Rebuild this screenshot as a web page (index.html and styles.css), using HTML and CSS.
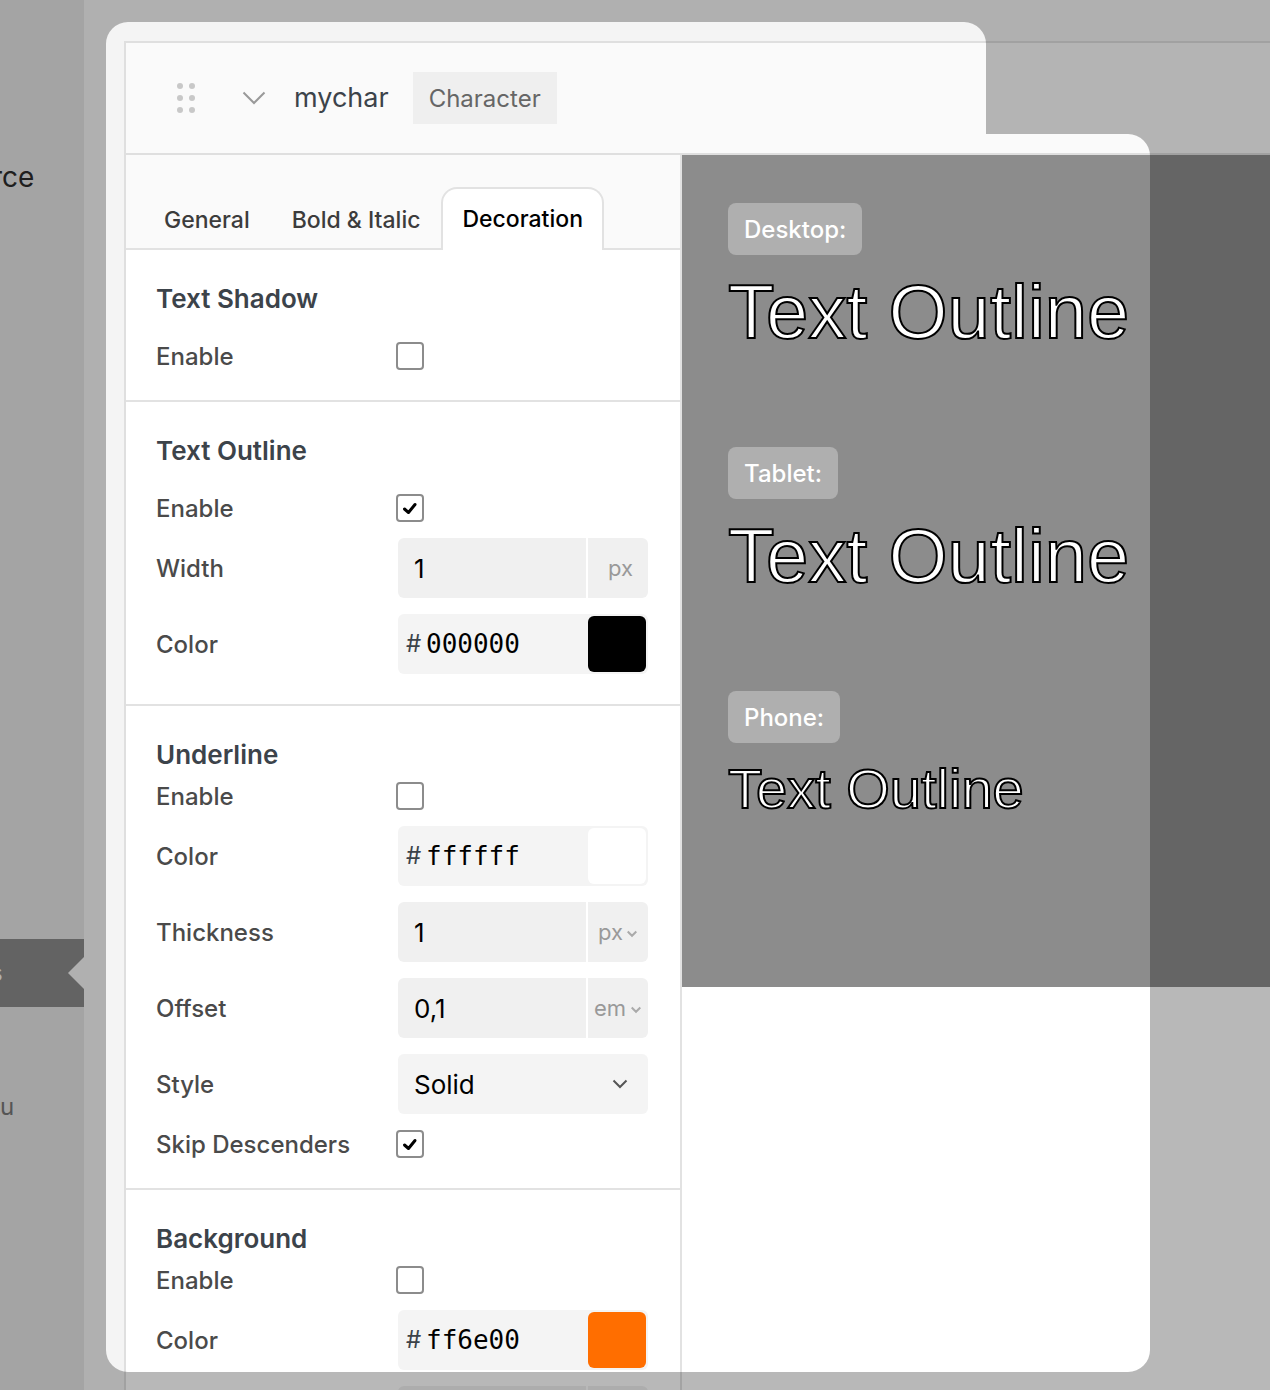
FILE: index.html
```html
<!DOCTYPE html>
<html lang="en">

<head>
    <meta charset="UTF-8">
    <meta name="viewport" content="width=device-width, initial-scale=1.0">
    <title>Character styles</title>
    <link rel="stylesheet" href="styles.css">
</head>

<body>
    <div class="app">
        <nav class="sidebar">
            <a class="menu-item" href="#">rce</a>
            <a class="menu-item current" href="#">s</a>
            <a class="menu-item submenu" href="#">u</a>
        </nav>

        <main class="content">
            <div class="panel">
                <header class="panel-head">
                    <button class="icon-btn drag" type="button" aria-label="Move">
                        <svg width="18" height="30" viewBox="0 0 18 30" fill="#c8c8c8">
                            <circle cx="3" cy="3" r="3" />
                            <circle cx="15" cy="3" r="3" />
                            <circle cx="3" cy="15" r="3" />
                            <circle cx="15" cy="15" r="3" />
                            <circle cx="3" cy="27" r="3" />
                            <circle cx="15" cy="27" r="3" />
                        </svg>
                    </button>
                    <button class="icon-btn collapse" type="button" aria-label="Collapse">
                        <svg width="24" height="14" viewBox="0 0 24 14" fill="none" stroke="#999" stroke-width="2">
                            <path d="M1.500 1.500L12 12L22.500 1.500" />
                        </svg>
                    </button>
                    <h1 class="panel-title">mychar</h1>
                    <span class="type">Character</span>
                </header>

                <div class="panel-body">
                    <form class="settings">
                        <div class="tabs" role="tablist">
                            <button class="tab" type="button" role="tab">General</button>
                            <button class="tab" type="button" role="tab">Bold &amp; Italic</button>
                            <button class="tab active" type="button" role="tab" aria-selected="true">Decoration</button>
                        </div>

                        <section class="group spaced">
                            <h2>Text Shadow</h2>
                            <div class="row">
                                <label for="shadow-enable">Enable</label>
                                <input type="checkbox" id="shadow-enable">
                            </div>
                        </section>

                        <section class="group spaced">
                            <h2>Text Outline</h2>
                            <div class="row">
                                <label for="outline-enable">Enable</label>
                                <input type="checkbox" id="outline-enable" checked>
                            </div>
                            <div class="row">
                                <label for="outline-width">Width</label>
                                <div class="field number">
                                    <input type="text" id="outline-width" value="1">
                                    <span class="unit">px</span>
                                </div>
                            </div>
                            <div class="row">
                                <label for="outline-color">Color</label>
                                <div class="field color">
                                    <span class="hash">#</span>
                                    <input type="text" id="outline-color" value="000000">
                                    <button class="swatch black" type="button" aria-label="Pick color"></button>
                                </div>
                            </div>
                        </section>

                        <section class="group">
                            <h2>Underline</h2>
                            <div class="row">
                                <label for="underline-enable">Enable</label>
                                <input type="checkbox" id="underline-enable">
                            </div>
                            <div class="row">
                                <label for="underline-color">Color</label>
                                <div class="field color">
                                    <span class="hash">#</span>
                                    <input type="text" id="underline-color" value="ffffff">
                                    <button class="swatch white" type="button" aria-label="Pick color"></button>
                                </div>
                            </div>
                            <div class="row">
                                <label for="underline-thickness">Thickness</label>
                                <div class="field number">
                                    <input type="text" id="underline-thickness" value="1">
                                    <select class="unit" aria-label="Thickness unit">
                                        <option>px</option>
                                    </select>
                                </div>
                            </div>
                            <div class="row">
                                <label for="underline-offset">Offset</label>
                                <div class="field number">
                                    <input type="text" id="underline-offset" value="0,1">
                                    <select class="unit wide" aria-label="Offset unit">
                                        <option>em</option>
                                    </select>
                                </div>
                            </div>
                            <div class="row">
                                <label for="underline-style">Style</label>
                                <select class="field dropdown" id="underline-style">
                                    <option>Solid</option>
                                </select>
                            </div>
                            <div class="row">
                                <label for="underline-skip">Skip Descenders</label>
                                <input type="checkbox" id="underline-skip" checked>
                            </div>
                        </section>

                        <section class="group">
                            <h2>Background</h2>
                            <div class="row">
                                <label for="bg-enable">Enable</label>
                                <input type="checkbox" id="bg-enable">
                            </div>
                            <div class="row">
                                <label for="bg-color">Color</label>
                                <div class="field color">
                                    <span class="hash">#</span>
                                    <input type="text" id="bg-color" value="ff6e00">
                                    <button class="swatch orange" type="button" aria-label="Pick color"></button>
                                </div>
                            </div>
                            <div class="row">
                                <div class="field number">
                                    <input type="text" aria-label="Background size">
                                    <span class="unit"></span>
                                </div>
                            </div>
                        </section>
                    </form>

                    <div class="preview">
                        <div class="device">
                            <span class="device-name">Desktop:</span>
                            <p class="sample">Text Outline</p>
                        </div>
                        <div class="device">
                            <span class="device-name">Tablet:</span>
                            <p class="sample">Text Outline</p>
                        </div>
                        <div class="device">
                            <span class="device-name">Phone:</span>
                            <p class="sample small">Text Outline</p>
                        </div>
                    </div>
                </div>
            </div>
        </main>

        <!-- dims everything outside the highlighted area -->
        <svg class="spotlight" aria-hidden="true">
            <path fill-rule="evenodd" d="M0 0H6000V4000H0Z M128 22H964A22 22 0 0 1 986 44V134H1128A22 22 0 0 1 1150 156V1350A22 22 0 0 1 1128 1372H128A22 22 0 0 1 106 1350V44A22 22 0 0 1 128 22Z" />
        </svg>
    </div>
</body>

</html>
```
FILE: styles.css
```css
* {
    margin: 0;
    padding: 0;
    box-sizing: border-box;
}

body {
    font-family: Inter, "Liberation Sans", sans-serif;
    font-size: 24px;
    line-height: 28px;
    color: #4a4a4a;
    background-color: #f4f4f4;
}

button,
input,
select {
    font: inherit;
    color: inherit;
    border: none;
    outline: none;
    appearance: none;
    background-color: transparent;
}

button {
    cursor: pointer;
}

.app {
    position: relative;
    display: flex;
    height: 100vh;
    overflow: hidden;
}

/* sidebar */

.sidebar {
    flex: none;
    width: 84px;
    padding-top: 143px;
    background-color: #e4e4e4;
    overflow: hidden;
}

.menu-item {
    display: block;
    height: 68px;
    line-height: 68px;
    font-size: 28px;
    text-indent: -8px;
    text-decoration: none;
    color: #2c2c2c;
}

.menu-item.current {
    position: relative;
    margin-top: 728px;
    font-size: 24px;
    text-indent: -10px;
    color: #f4f4f4;
    background-color: #8a8a8a;
}

.menu-item.current::after {
    content: "";
    position: absolute;
    top: 18px;
    right: 0;
    border: 16px solid transparent;
    border-left: none;
    border-right-color: #f4f4f4;
}

.menu-item.submenu {
    margin-top: 66px;
    font-size: 24px;
    text-indent: 0;
    color: #777;
}

/* panel */

.content {
    flex: 1;
    min-width: 0;
    padding: 41px 0 0 40px;
}

.panel {
    border-top: 2px solid #dfdfdf;
    border-left: 2px solid #dfdfdf;
    background-color: #fff;
}

.panel-head {
    display: flex;
    align-items: center;
    height: 112px;
    padding-left: 51px;
    border-bottom: 2px solid #dfdfdf;
    background-color: #fafafa;
}

.icon-btn svg {
    display: block;
}

.collapse {
    margin: 0 28px 0 47px;
}

.panel-title {
    font-size: 27px;
    font-weight: 400;
    color: #3c434a;
}

.type {
    margin-left: 24px;
    padding: 13px 16px 11px;
    color: #666;
    background-color: #efefef;
}

.panel-body {
    display: flex;
    align-items: flex-start;
}

.settings {
    flex: none;
    width: 556px;
    border-right: 2px solid #e2e2e2;
}

.tabs {
    display: flex;
    align-items: flex-end;
    height: 95px;
    padding-left: 17px;
    border-bottom: 2px solid #e2e2e2;
    background-color: #fafafa;
}

.tab {
    height: 56px;
    padding: 0 21px;
    font-size: 23px;
    font-weight: 500;
    color: #3c3c3c;
}

.tab.active {
    height: 63px;
    margin-bottom: -2px;
    padding: 0 19px 2px;
    border: 2px solid #e2e2e2;
    border-bottom: none;
    border-radius: 16px 16px 0 0;
    color: #000;
    background-color: #fff;
}

.group {
    display: flex;
    flex-direction: column;
    gap: 16px;
    padding: 30px;
    border-bottom: 2px solid #e2e2e2;
}

.group h2 {
    margin-bottom: -8px;
    font-size: 26px;
    font-weight: 600;
    line-height: 38px;
    color: #3c434a;
}

.group.spaced h2 {
    margin-bottom: 8px;
}

.row {
    display: flex;
    align-items: center;
}

.row label {
    width: 240px;
    padding-top: 2px;
    font-weight: 500;
    line-height: 26px;
}

.row input[type=checkbox] {
    width: 28px;
    height: 28px;
    border: 2px solid #8c8c8c;
    border-radius: 4px;
    background-color: #fff;
}

.row input[type=checkbox]:checked {
    background: #fff url("data:image/svg+xml,%3Csvg xmlns='http://www.w3.org/2000/svg' viewBox='0 0 24 24' fill='none' stroke='%23000' stroke-width='3' stroke-linecap='round' stroke-linejoin='round'%3E%3Cpath d='M6.500 13L10.500 16.500L17 8.500'/%3E%3C/svg%3E") center / 24px 24px no-repeat;
}

/* fields */

.field {
    display: flex;
    width: 250px;
    height: 60px;
    margin-left: 2px;
    border-radius: 6px;
    overflow: hidden;
    color: #000;
}

.row > .field:first-child {
    margin-left: 242px;
}

.field input {
    flex: 1;
    min-width: 0;
}

.number {
    gap: 2px;
}

.number input {
    padding: 2px 0 0 16px;
    font-size: 26px;
    background-color: #f0f0f0;
}

.unit {
    width: 60px;
    padding-left: 20px;
    font-size: 22px;
    line-height: 60px;
    color: #999;
    background-color: #f0f0f0;
}

select.unit {
    padding-left: 10px;
    background-image: url("data:image/svg+xml,%3Csvg xmlns='http://www.w3.org/2000/svg' viewBox='0 0 10 8' fill='none' stroke='%23aaa' stroke-width='2'%3E%3Cpath d='M0.700 1.500L5 5.800L9.300 1.500'/%3E%3C/svg%3E");
    background-repeat: no-repeat;
    background-position: 39px 28px;
    background-size: 10px 8px;
}

select.unit.wide {
    padding-left: 6px;
    background-position: 43px 28px;
}

.color {
    align-items: center;
    padding-right: 2px;
    background-color: #f4f4f4;
}

.hash {
    width: 28px;
    padding-left: 8px;
    color: #3c434a;
}

.color input {
    font-family: "DejaVu Sans Mono", monospace;
    font-size: 26px;
}

.swatch {
    width: 58px;
    height: 56px;
    border-radius: 6px;
}

.swatch.black {
    background-color: #000;
}

.swatch.white {
    background-color: #fff;
}

.swatch.orange {
    background-color: #ff6e00;
}

.dropdown {
    padding: 2px 0 0 16px;
    font-size: 26px;
    background: #f4f4f4 url("data:image/svg+xml,%3Csvg xmlns='http://www.w3.org/2000/svg' viewBox='0 0 16 10' fill='none' stroke='%23555' stroke-width='2'%3E%3Cpath d='M1.500 1.500L8 8L14.500 1.500'/%3E%3C/svg%3E") 214px 25px / 16px 10px no-repeat;
}

/* preview */

.preview {
    flex: 1;
    min-width: 0;
    min-height: 832px;
    padding: 48px 46px;
    background-color: #8c8c8c;
}

.device {
    height: 244px;
}

.device-name {
    display: inline-block;
    padding: 13px 16px 11px;
    border-radius: 8px;
    font-weight: 500;
    color: #fff;
    background-color: #afafaf;
}

.sample {
    margin-top: 12px;
    font-family: "Liberation Sans", Arial, sans-serif;
    font-size: 76px;
    line-height: 90px;
    white-space: nowrap;
    color: #fff;
    -webkit-text-stroke: 2px #000;
}

.sample.small {
    font-size: 56px;
    line-height: 68px;
}

.spotlight {
    position: absolute;
    top: 0;
    left: 0;
    width: 100%;
    height: 100%;
    fill: rgba(0, 0, 0, 0.28);
    pointer-events: none;
}
```
